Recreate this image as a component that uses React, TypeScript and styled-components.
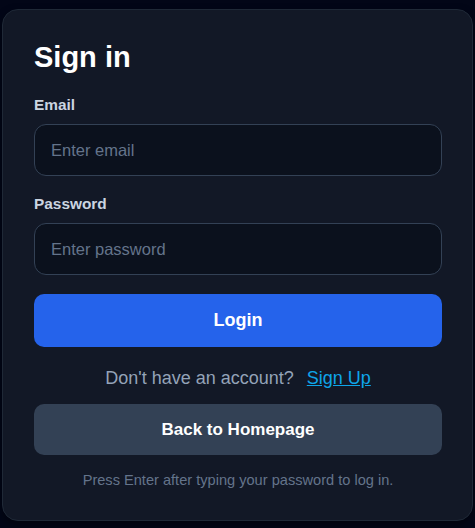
import styled, { createGlobalStyle } from "styled-components";

const GlobalStyle = createGlobalStyle`
  html, body {
    margin: 0;
    padding: 0;
    background: #020617;
    font-family: "Liberation Sans", Arial, sans-serif;
  }
  * {
    box-sizing: border-box;
  }
`;

export default function App() {
  return (
    <>
      <GlobalStyle />
      <Page>
        <Card>
          <Title>Sign in</Title>
          <Field>
            <Label htmlFor="email">Email</Label>
            <Input id="email" type="email" placeholder="Enter email" />
          </Field>
          <Field $last>
            <Label htmlFor="password">Password</Label>
            <Input id="password" type="password" placeholder="Enter password" />
          </Field>
          <Button $variant="primary">Login</Button>
          <SignUpRow>
            Don't have an account?
            <SignUpLink href="#">Sign Up</SignUpLink>
          </SignUpRow>
          <Button $variant="secondary">Back to Homepage</Button>
          <Hint>Press Enter after typing your password to log in.</Hint>
        </Card>
      </Page>
    </>
  );
}

const Page = styled.div`
  padding: 9px 2px 7px;
`;

const Card = styled.div`
  display: flex;
  flex-direction: column;
  background: #121826;
  border: 1px solid #1f2937;
  border-radius: 16px;
  padding: 31px 30px 30px 31px;
  box-shadow: 0 4px 10px rgba(0, 0, 0, 0.4);
`;

const Title = styled.h1`
  margin: 0 0 21px;
  font-size: 29px;
  line-height: 32px;
  font-weight: 700;
  color: #ffffff;
`;

const Field = styled.div<{ $last?: boolean }>`
  display: flex;
  flex-direction: column;
  gap: 8px;
  margin-bottom: ${(p) => (p.$last ? "19px" : "17px")};
`;

const Label = styled.label`
  font-size: 15.4px;
  line-height: 22px;
  font-weight: 700;
  color: #cbd5e1;
`;

const Input = styled.input`
  height: 52px;
  width: 100%;
  padding: 0 16px;
  background: #0b111d;
  border: 1px solid #334155;
  border-radius: 12px;
  color: #e2e8f0;
  font-family: inherit;
  font-size: 16.5px;
  outline: none;

  &::placeholder {
    color: #64748b;
  }
`;

const Button = styled.button<{ $variant: "primary" | "secondary" }>`
  display: flex;
  align-items: center;
  justify-content: center;
  width: 100%;
  height: ${(p) => (p.$variant === "primary" ? "53px" : "51px")};
  border: none;
  border-radius: 10px;
  background: ${(p) => (p.$variant === "primary" ? "#2563eb" : "#334155")};
  color: #ffffff;
  font-family: inherit;
  font-weight: 700;
  font-size: ${(p) => (p.$variant === "primary" ? "18px" : "17px")};
  cursor: pointer;
`;

const SignUpRow = styled.div`
  display: flex;
  justify-content: center;
  align-items: center;
  gap: 13px;
  margin: 19px 0 14px;
  font-size: 18px;
  line-height: 24px;
  color: #94a3b8;
`;

const SignUpLink = styled.a`
  color: #0ea5e9;
  text-decoration: underline;
`;

const Hint = styled.p`
  margin: 15px 0 0;
  text-align: center;
  font-size: 14.6px;
  line-height: 20px;
  color: #64748b;
`;
